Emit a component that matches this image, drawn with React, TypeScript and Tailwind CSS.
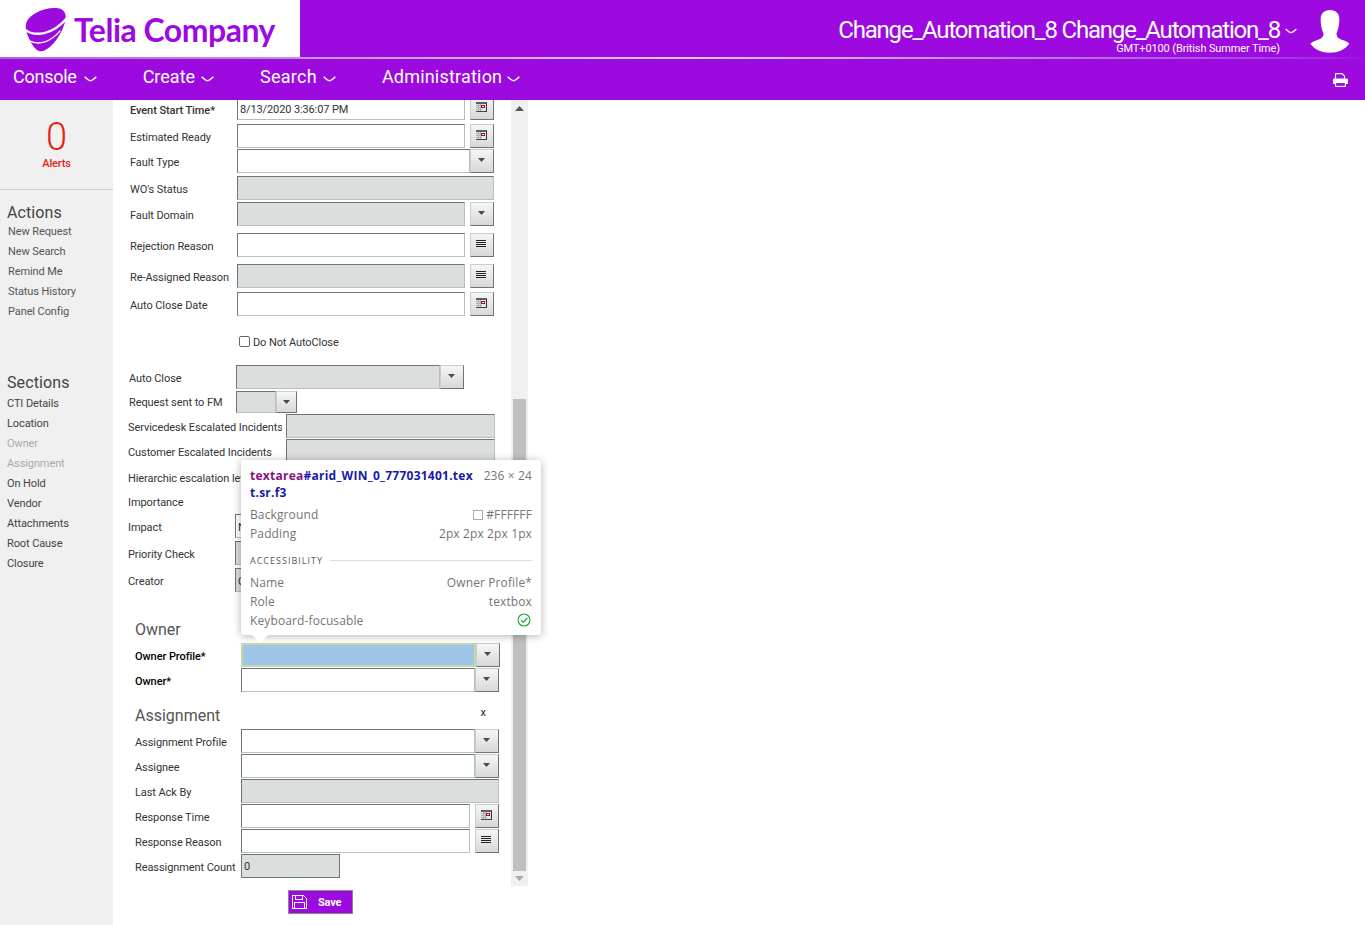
import React from "react";

const Chevron = ({ className }: { className: string }) => (
  <svg viewBox="0 0 13 6" className={className} fill="none" stroke="white" strokeWidth="1.4">
    <path d="M0.7 0.8 C3 3.2 4.5 4.6 6.5 4.8 C8.5 4.6 10 3.2 12.3 0.8" />
  </svg>
);

const Calendar = () => (
  <svg width="11" height="10" viewBox="0 0 11 10" shapeRendering="crispEdges">
    <rect x="0" y="0" width="11" height="10" fill="#e6e6e6" />
    <rect x="0" y="0" width="11" height="2" fill="#56606a" />
    <path d="M2 2v7M4 2v7M0 3.500h6M0 5.500h6M0 7.500h6" stroke="#b0b0b0" strokeWidth="1" />
    <rect x="5" y="3" width="4" height="3" fill="#9a1020" />
    <rect x="6" y="4" width="2" height="1" fill="#fff" />
    <rect x="10" y="1" width="1" height="9" fill="#333" />
    <rect x="0" y="9" width="11" height="1" fill="#444" />
  </svg>
);

const Lines = () => (
  <svg width="10" height="7" viewBox="0 0 10 7" shapeRendering="crispEdges">
    <path d="M0 .5h10M0 2.500h10M0 4.500h10M0 6.500h10" stroke="#222" strokeWidth="1" />
  </svg>
);

const Arrow = () => (
  <svg width="7" height="4" viewBox="0 0 7 4">
    <path d="M0 0h7L3.500 4z" fill="#4a4a4a" />
  </svg>
);

const Btn = ({ kind, className = "w-6" }: { kind: "cal" | "list" | "drop"; className?: string }) => (
  <div
    className={`${className} h-6 shrink-0 flex items-center justify-center pb-[3px] pr-[2px] border border-t-[#c9cccc] border-l-[#c9cccc] border-r-[#6e7373] border-b-[#6e7373] bg-gradient-to-b from-[#f6f6f6] to-[#d8d8d8]`}
  >
    {kind === "cal" ? <Calendar /> : kind === "list" ? <Lines /> : <Arrow />}
  </div>
);

const Field = ({
  className,
  disabled,
  text,
}: {
  className: string;
  disabled?: boolean;
  text?: string;
}) => (
  <div
    className={`${className} h-6 shrink-0 border border-t-[#6e7678] border-l-[#6e7678] border-r-[#b4c0c4] border-b-[#b4c0c4] pl-[2px] text-[11px] leading-[26px] tracking-[-0.12px] text-[#333] ${
      disabled ? "bg-[#dcdedd]" : "bg-white"
    }`}
  >
    {text}
  </div>
);

const Row = ({
  className,
  labelClass,
  label,
  children,
}: {
  className: string;
  labelClass: string;
  label: string;
  children?: React.ReactNode;
}) => (
  <div className={`${className} flex h-6`}>
    <div className={`${labelClass} h-6 shrink-0 whitespace-nowrap text-[11px] leading-[28px] tracking-[-0.08px] text-[#333]`}>{label}</div>
    {children}
  </div>
);

const Sidebar = () => (
  <aside className="w-[113px] shrink-0 bg-[#f0f0f0] h-[825px]">
    <div className="h-[90px] border-b border-[#cccccc] flex flex-col items-center">
      <div className="mt-[18px] text-[38px] leading-[38px] font-light text-[#e2231a]">0</div>
      <div className="mt-px text-[11px] leading-[14px] font-medium tracking-[-0.2px] text-[#e2231a]">Alerts</div>
    </div>
    <div className="pl-[7px] mt-[13px] text-[16px] leading-[20px] tracking-[0.1px] text-[#444]">Actions</div>
    <ul className="pl-[8px] mt-[-1px]">
      {["New Request", "New Search", "Remind Me", "Status History", "Panel Config"].map((t) => (
        <li key={t} className="h-5 text-[11px] leading-[20px] tracking-[-0.1px] text-[#555]">{t}</li>
      ))}
    </ul>
    <div className="pl-[7px] mt-[51px] text-[16px] leading-[20px] tracking-[0.1px] text-[#444]">Sections</div>
    <ul className="pl-[7px] mt-px">
      {["CTI Details", "Location", "Owner", "Assignment", "On Hold", "Vendor", "Attachments", "Root Cause", "Closure"].map((t) => (
        <li key={t} className={`h-5 text-[11px] leading-[20px] tracking-[-0.1px] ${t === "Owner" || t === "Assignment" ? "text-[#aaaaaa]" : "text-[#444]"}`}>{t}</li>
      ))}
    </ul>
  </aside>
);

const Form = () => (
  <div className="w-[398px] h-[786px] overflow-hidden">
    <Row className="mt-[-4px]" labelClass="pl-[17px] w-[124px] font-medium pt-px" label="Event Start Time*">
      <Field className="w-[228px]" text="8/13/2020 3:36:07 PM" />
      <div className="w-[5px]" />
      <Btn kind="cal" />
    </Row>
    <Row className="mt-[4px]" labelClass="pl-[17px] w-[124px]" label="Estimated Ready">
      <Field className="w-[228px]" />
      <div className="w-[5px]" />
      <Btn kind="cal" />
    </Row>
    <Row className="mt-px" labelClass="pl-[17px] w-[124px]" label="Fault Type">
      <Field className="w-[233px]" />
      <Btn kind="drop" />
    </Row>
    <Row className="mt-[3px]" labelClass="pl-[17px] w-[124px]" label="WO's Status">
      <Field className="w-[257px]" disabled />
    </Row>
    <Row className="mt-[2px]" labelClass="pl-[17px] w-[124px]" label="Fault Domain">
      <Field className="w-[228px]" disabled />
      <div className="w-[5px]" />
      <Btn kind="drop" />
    </Row>
    <Row className="mt-[7px]" labelClass="pl-[17px] w-[124px]" label="Rejection Reason">
      <Field className="w-[228px]" />
      <div className="w-[5px]" />
      <Btn kind="list" />
    </Row>
    <Row className="mt-[7px]" labelClass="pl-[17px] w-[124px]" label="Re-Assigned Reason">
      <Field className="w-[228px]" disabled />
      <div className="w-[5px]" />
      <Btn kind="list" />
    </Row>
    <Row className="mt-[4px]" labelClass="pl-[17px] w-[124px]" label="Auto Close Date">
      <Field className="w-[228px]" />
      <div className="w-[5px]" />
      <Btn kind="cal" />
    </Row>
    <div className="mt-[19px] h-[12px] pl-[126px] flex items-center">
      <div className="w-[11px] h-[11px] rounded-[2px] border border-[#666] bg-white" />
      <span className="ml-[3px] mt-[5px] text-[11px] tracking-[-0.1px] text-[#333]">Do Not AutoClose</span>
    </div>
    <Row className="mt-[18px]" labelClass="pl-[16px] w-[123px]" label="Auto Close">
      <Field className="w-[204px]" disabled />
      <Btn kind="drop" />
    </Row>
    <div className="mt-[2px] flex h-[22px]">
      <div className="pl-[16px] w-[123px] text-[11px] leading-[24px] tracking-[-0.08px] text-[#333] whitespace-nowrap">Request sent to FM</div>
      <div className="w-[40px] h-[22px] bg-[#dcdedd] border border-t-[#6e7678] border-l-[#6e7678] border-r-[#b4c0c4] border-b-[#b4c0c4]" />
      <div className="w-[21px] h-[22px] flex items-center justify-center pb-[1px] border border-t-[#c9cccc] border-l-[#c9cccc] border-r-[#6e7373] border-b-[#6e7373] bg-gradient-to-b from-[#f6f6f6] to-[#d8d8d8]">
        <Arrow />
      </div>
    </div>
    <Row className="mt-px" labelClass="pl-[15px] w-[169px] mr-[4px] overflow-hidden" label="Servicedesk Escalated Incidents">
      <Field className="w-[209px]" disabled />
    </Row>
    <Row className="mt-px" labelClass="pl-[15px] w-[169px] mr-[4px] overflow-hidden" label="Customer Escalated Incidents">
      <Field className="w-[209px]" disabled />
    </Row>
    <Row className="mt-[2px]" labelClass="pl-[15px] w-[128px]" label="Hierarchic escalation level" />
    <Row className="" labelClass="pl-[15px] w-[122px]" label="Importance" />
    <Row className="mt-px" labelClass="pl-[15px] w-[122px]" label="Impact">
      <Field className="w-[200px]" text="N" />
    </Row>
    <Row className="mt-[3px]" labelClass="pl-[15px] w-[122px]" label="Priority Check">
      <Field className="w-[200px]" disabled />
    </Row>
    <Row className="mt-[3px]" labelClass="pl-[15px] w-[122px]" label="Creator">
      <Field className="w-[200px]" disabled text="C" />
    </Row>
    <div className="mt-[25px] pl-[22px] h-6 text-[16px] leading-[26px] text-[#555]">Owner</div>
    <Row className="mt-[2px]" labelClass="pl-[22px] w-[128px] font-medium text-black" label="Owner Profile*">
      <div className="w-[235px] h-6 shrink-0 bg-[#9fc5e8] border-2 border-[#c6d8a8]" />
      <Btn kind="drop" />
    </Row>
    <Row className="mt-px" labelClass="pl-[22px] w-[128px] font-medium text-black" label="Owner*">
      <Field className="w-[234px]" />
      <Btn kind="drop" />
    </Row>
    <div className="mt-[11px] pl-[22px] w-[373px] h-6 flex justify-between">
      <span className="text-[16px] leading-[26px] text-[#555]">Assignment</span>
      <span className="text-[11px] leading-[20px] text-[#222]">x</span>
    </div>
    <Row className="mt-[2px]" labelClass="pl-[22px] w-[128px]" label="Assignment Profile">
      <Field className="w-[234px]" />
      <Btn kind="drop" />
    </Row>
    <Row className="mt-px" labelClass="pl-[22px] w-[128px]" label="Assignee">
      <Field className="w-[234px]" />
      <Btn kind="drop" />
    </Row>
    <Row className="mt-px" labelClass="pl-[22px] w-[128px]" label="Last Ack By">
      <Field className="w-[258px]" disabled />
    </Row>
    <Row className="mt-px" labelClass="pl-[22px] w-[128px]" label="Response Time">
      <Field className="w-[229px]" />
      <div className="w-[5px]" />
      <Btn kind="cal" />
    </Row>
    <Row className="mt-px" labelClass="pl-[22px] w-[128px]" label="Response Reason">
      <Field className="w-[229px]" />
      <div className="w-[5px]" />
      <Btn kind="list" />
    </Row>
    <Row className="mt-px" labelClass="pl-[22px] w-[128px]" label="Reassignment Count">
      <div className="w-[99px] h-6 border border-[#6e7678] bg-[#dcdedd] pl-[2px] text-[11px] leading-[24px] text-[#333]">0</div>
    </Row>
  </div>
);

const Scrollbar = () => (
  <div className="w-[17px] h-[786px] bg-[#f0f0f0] flex flex-col items-center">
    <svg width="9" height="5" viewBox="0 0 9 5" className="mt-[6px]">
      <path d="M4.500 0L9 5H0z" fill="#555" />
    </svg>
    <div className="w-[13px] h-[472px] bg-[#c0c0c0] mt-[288px]" />
    <svg width="9" height="5" viewBox="0 0 9 5" className="mt-[5px]">
      <path d="M0 0h9L4.500 5z" fill="#aaa" />
    </svg>
  </div>
);

const Tip = () => (
  <div className="absolute left-[241px] top-[460px] w-[300px] h-[175px] bg-white rounded-[3px] shadow-[0_1px_8px_rgba(0,0,0,0.3)] px-[9px] pt-[7px] text-[12px] leading-[19px] tracking-[0.12px] text-[#757575] font-['Open_Sans',sans-serif]">
    <div className="flex justify-between">
      <div className="font-bold leading-[17px] whitespace-nowrap tracking-[0.25px] text-[#1a1aa6]">
        <span className="text-[#881280]">textarea</span>#arid_WIN_0_777031401.tex
        <br />
        t.sr.f3
      </div>
      <span className="leading-[18px]">236 × 24</span>
    </div>
    <div className="mt-[4px] flex justify-between">
      <span>Background</span>
      <span className="flex items-center">
        <span className="w-[10px] h-[10px] border border-[#aaa] mr-[3px] inline-block" />#FFFFFF
      </span>
    </div>
    <div className="flex justify-between">
      <span>Padding</span>
      <span>2px 2px 2px 1px</span>
    </div>
    <div className="mt-[8px] flex items-center text-[9px] tracking-[1px] text-[#555]">
      <span>ACCESSIBILITY</span>
      <div className="ml-[7px] flex-1 h-px bg-[#ddd]" />
    </div>
    <div className="mt-[3px] flex justify-between">
      <span>Name</span>
      <span>Owner Profile*</span>
    </div>
    <div className="flex justify-between">
      <span>Role</span>
      <span>textbox</span>
    </div>
    <div className="flex justify-between items-center">
      <span>Keyboard-focusable</span>
      <svg width="14" height="14" viewBox="0 0 14 14" fill="none" stroke="#12a633" strokeWidth="1.1" className="mr-px mb-[2px]">
        <circle cx="7" cy="7" r="6" />
        <path d="M4 7.200l2.200 2.200L10.400 5" />
      </svg>
    </div>
    <div className="absolute left-[11px] top-[175px] w-0 h-0 border-x-[8px] border-x-transparent border-t-[8px] border-t-white" />
  </div>
);

const NAV: [string, string, string][] = [
  ["Console", "tracking-[-0.25px]", "ml-[7px]"],
  ["Create", "tracking-[0px]", "ml-[6px]"],
  ["Search", "tracking-[0.25px]", "ml-[6px]"],
  ["Administration", "tracking-[0.2px]", "ml-[5px]"],
];

export default function App() {
  return (
    <div className="relative w-[1365px] h-[925px] overflow-hidden bg-white font-['Roboto',sans-serif]">
      <header className="flex h-[57px] bg-[#9c0adf]">
        <div className="w-[300px] bg-white flex items-center">
          <svg width="50" height="54" viewBox="0 0 150 162" className="ml-[19px] shrink-0">
            <path d="M110 18C128 18 142 28 140 48C137 80 105 140 68 148C50 150 36 125 26 100C14 70 20 50 50 33C70 22 92 17 110 18Z" fill="#9c0adf" />
            <path d="M16 82C50 108 105 95 144 48" fill="none" stroke="#fff" strokeWidth="7" />
            <path d="M30 116C60 132 95 120 124 86" fill="none" stroke="#fff" strokeWidth="4" />
          </svg>
          <span className="ml-[5px] mt-[3px] text-[32px] leading-none font-['Lato',sans-serif] font-bold text-[#9c0adf] tracking-[-0.5px] whitespace-nowrap">Telia Company</span>
        </div>
        <div className="flex-1 flex justify-end">
          <div className="flex flex-col items-end">
            <div className="mt-[18px] h-[25px] text-[24px] leading-[25px] text-white tracking-[-1.2px] whitespace-nowrap">
              Change_Automation_8 Change_Automation_8
            </div>
            <div className="text-[11px] leading-[12px] text-white tracking-[-0.12px] whitespace-nowrap">GMT+0100 (British Summer Time)</div>
          </div>
          <Chevron className="ml-[5px] mt-[28px] w-[12px] h-[6px]" />
          <svg width="40" height="45" viewBox="0 0 120 135" className="mt-[9px] ml-[13px] mr-[15px]" fill="white">
            <path d="M60 3C78 3 88 14 88 30C88 50 84 62 80 72C78 82 85 90 100 94C108 97 114 100 118 104C104 122 84 131 60 131C36 131 14 122 1 104C6 99 14 96 22 93C36 89 43 80 40 72C36 62 32 50 32 30C32 14 42 3 60 3Z" />
          </svg>
        </div>
      </header>
      <div className="h-[2px] bg-gradient-to-r from-[#b060e0] via-[#cfcfcf] to-[#9c0adf]" />
      <nav className="flex items-center h-[41px] bg-[#9c0adf] pl-[13px] pb-[5px] text-white">
        <div className="flex gap-[46px] text-[18px] leading-[36px]">
          {NAV.map(([t, c, m]) => (
            <div key={t} className={`${c} flex items-center whitespace-nowrap`}>
              {t}
              <Chevron className={`${m} w-[13px] h-[6px] mt-[3px]`} />
            </div>
          ))}
        </div>
        <svg width="15" height="14" viewBox="0 0 15 14" className="ml-auto mr-[17px] mt-[5px]" fill="none">
          <path d="M2.500 6V.6h6.500L11.500 3v3" stroke="white" strokeWidth="1.100" />
          <path d="M1 5.500h13a1 1 0 0 1 1 1V11h-3V9H3v2H0V6.500a1 1 0 0 1 1-1z" fill="white" />
          <rect x="2.600" y="9.500" width="9.800" height="3.900" stroke="white" strokeWidth="1.100" />
        </svg>
      </nav>
      <div className="flex">
        <Sidebar />
        <div className="w-[415px]">
          <div className="flex">
            <Form />
            <Scrollbar />
          </div>
          <div className="mt-[4px] ml-[175px] w-[65px] h-6 bg-[#9c0adf] border border-[#8a8a8a] flex items-center pl-[3px] text-white">
            <svg width="15" height="14" viewBox="0 0 15 14" fill="none" stroke="white" strokeWidth="1" shapeRendering="crispEdges">
              <path d="M.5.5h11l3 3v10H.5z" />
              <path d="M3.500.5v4h7v-4M2.500 13.500v-6h10v6" />
            </svg>
            <span className="ml-[11px] mt-[2px] text-[11px] font-bold tracking-[-0.2px]">Save</span>
          </div>
        </div>
      </div>
      <Tip />
    </div>
  );
}
